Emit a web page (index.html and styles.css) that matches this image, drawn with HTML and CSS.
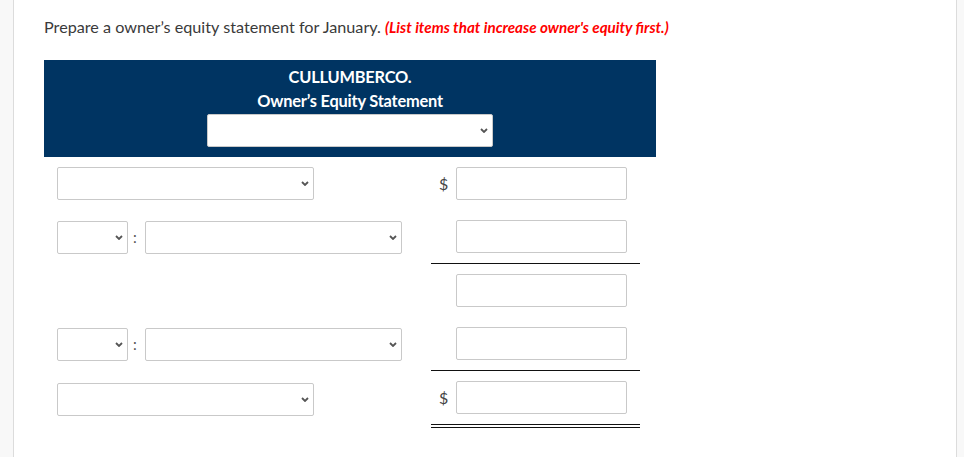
FILE: index.html
```html
<!DOCTYPE html>
<html>
<head>
<meta charset="utf-8">
<link rel="stylesheet" href="styles.css">
</head>
<body>
<div class="page">
  <main class="main">
    <p class="prompt">Prepare a owner’s equity statement for January. <em class="hint">(List items that increase owner's equity first.)</em></p>
    <section class="sheet">
      <header class="head">
        <div class="company">CULLUMBERCO.</div>
        <div class="title">Owner’s Equity Statement</div>
        <div class="sel sel-head"><svg class="chev" width="8" height="5" viewBox="0 0 8 5"><path d="M1 1l3 3 3-3" fill="none" stroke="#555" stroke-width="1.8"/></svg></div>
      </header>

      <div class="row">
        <div class="label"><div class="sel sel-wide"><svg class="chev" width="8" height="5" viewBox="0 0 8 5"><path d="M1 1l3 3 3-3" fill="none" stroke="#555" stroke-width="1.8"/></svg></div></div>
        <div class="amount"><span class="cur">$</span><input class="box" type="text"></div>
      </div>

      <div class="row">
        <div class="label">
          <div class="sel sel-small"><svg class="chev" width="8" height="5" viewBox="0 0 8 5"><path d="M1 1l3 3 3-3" fill="none" stroke="#555" stroke-width="1.8"/></svg></div>
          <span class="colon">:</span>
          <div class="sel sel-wide"><svg class="chev" width="8" height="5" viewBox="0 0 8 5"><path d="M1 1l3 3 3-3" fill="none" stroke="#555" stroke-width="1.8"/></svg></div>
        </div>
        <div class="amount line"><span class="cur"></span><input class="box" type="text"></div>
      </div>

      <div class="row">
        <div class="label"></div>
        <div class="amount"><span class="cur"></span><input class="box" type="text"></div>
      </div>

      <div class="row">
        <div class="label">
          <div class="sel sel-small"><svg class="chev" width="8" height="5" viewBox="0 0 8 5"><path d="M1 1l3 3 3-3" fill="none" stroke="#555" stroke-width="1.8"/></svg></div>
          <span class="colon">:</span>
          <div class="sel sel-wide"><svg class="chev" width="8" height="5" viewBox="0 0 8 5"><path d="M1 1l3 3 3-3" fill="none" stroke="#555" stroke-width="1.8"/></svg></div>
        </div>
        <div class="amount line"><span class="cur"></span><input class="box" type="text"></div>
      </div>

      <div class="row">
        <div class="label"><div class="sel sel-wide"><svg class="chev" width="8" height="5" viewBox="0 0 8 5"><path d="M1 1l3 3 3-3" fill="none" stroke="#555" stroke-width="1.8"/></svg></div></div>
        <div class="amount double"><span class="cur">$</span><input class="box" type="text"></div>
      </div>
    </section>
  </main>
</div>
</body>
</html>
```

FILE: styles.css
```css
html, body {
  margin: 0;
  padding: 0;
  background: #f8f8f8;
}
body {
  font-family: Lato, "Liberation Sans", sans-serif;
  color: #333;
  font-size: 14px;
}
.page {
  display: flex;
  height: 457px;
  padding: 0 7px 0 13px;
}
.main {
  flex: 1;
  background: #fff;
  border-left: 1px solid #dcdcdc;
  border-right: 1px solid #dcdcdc;
  padding: 0 0 0 30px;
}
.prompt {
  margin: 0;
  padding-top: 17px;
  line-height: 19px;
  font-size: 16.2px;
  color: #3a3a3a;
}
.hint {
  color: #f00;
  font-weight: bold;
  font-style: italic;
  font-size: 15.2px;
}
.sheet {
  width: 612px;
  margin-top: 23px;
}
.head {
  background: #003462;
  color: #fff;
  display: flex;
  flex-direction: column;
  align-items: center;
  padding: 5px 0 10px;
  font-weight: bold;
  font-size: 16.4px;
}
.company, .title {
  line-height: 24px;
  letter-spacing: -0.2px;
}
.head .sel-head {
  margin-top: 1px;
  width: 286px;
  height: 33px;
}
.sel {
  box-sizing: border-box;
  height: 33px;
  background: #fff;
  border: 1px solid #c9c9c9;
  border-radius: 2px;
  display: flex;
  align-items: center;
  justify-content: flex-end;
  padding-right: 4px;
}
.sel-wide { width: 257px; }
.sel-small { width: 71px; }
.row {
  display: flex;
  padding-left: 13px;
}
.label {
  width: 374px;
  display: flex;
  align-items: center;
  padding: 10px 0;
}
.colon {
  width: 17px;
  box-sizing: border-box;
  padding-left: 5px;
  color: #555;
  font-size: 15px;
}
.amount {
  width: 209px;
  display: flex;
  align-items: center;
  padding: 10px 0;
}
.amount.line { border-bottom: 1px solid #111; }
.amount.double { border-bottom: 4px double #111; }
.cur {
  width: 25px;
  box-sizing: border-box;
  padding-left: 8px;
  color: #444;
  font-size: 16px;
}
.box {
  box-sizing: border-box;
  width: 171px;
  height: 33px;
  margin: 0;
  border: 1px solid #c9c9c9;
  border-radius: 2px;
  background: #fff;
  padding: 0 6px;
  font-family: inherit;
}
```
